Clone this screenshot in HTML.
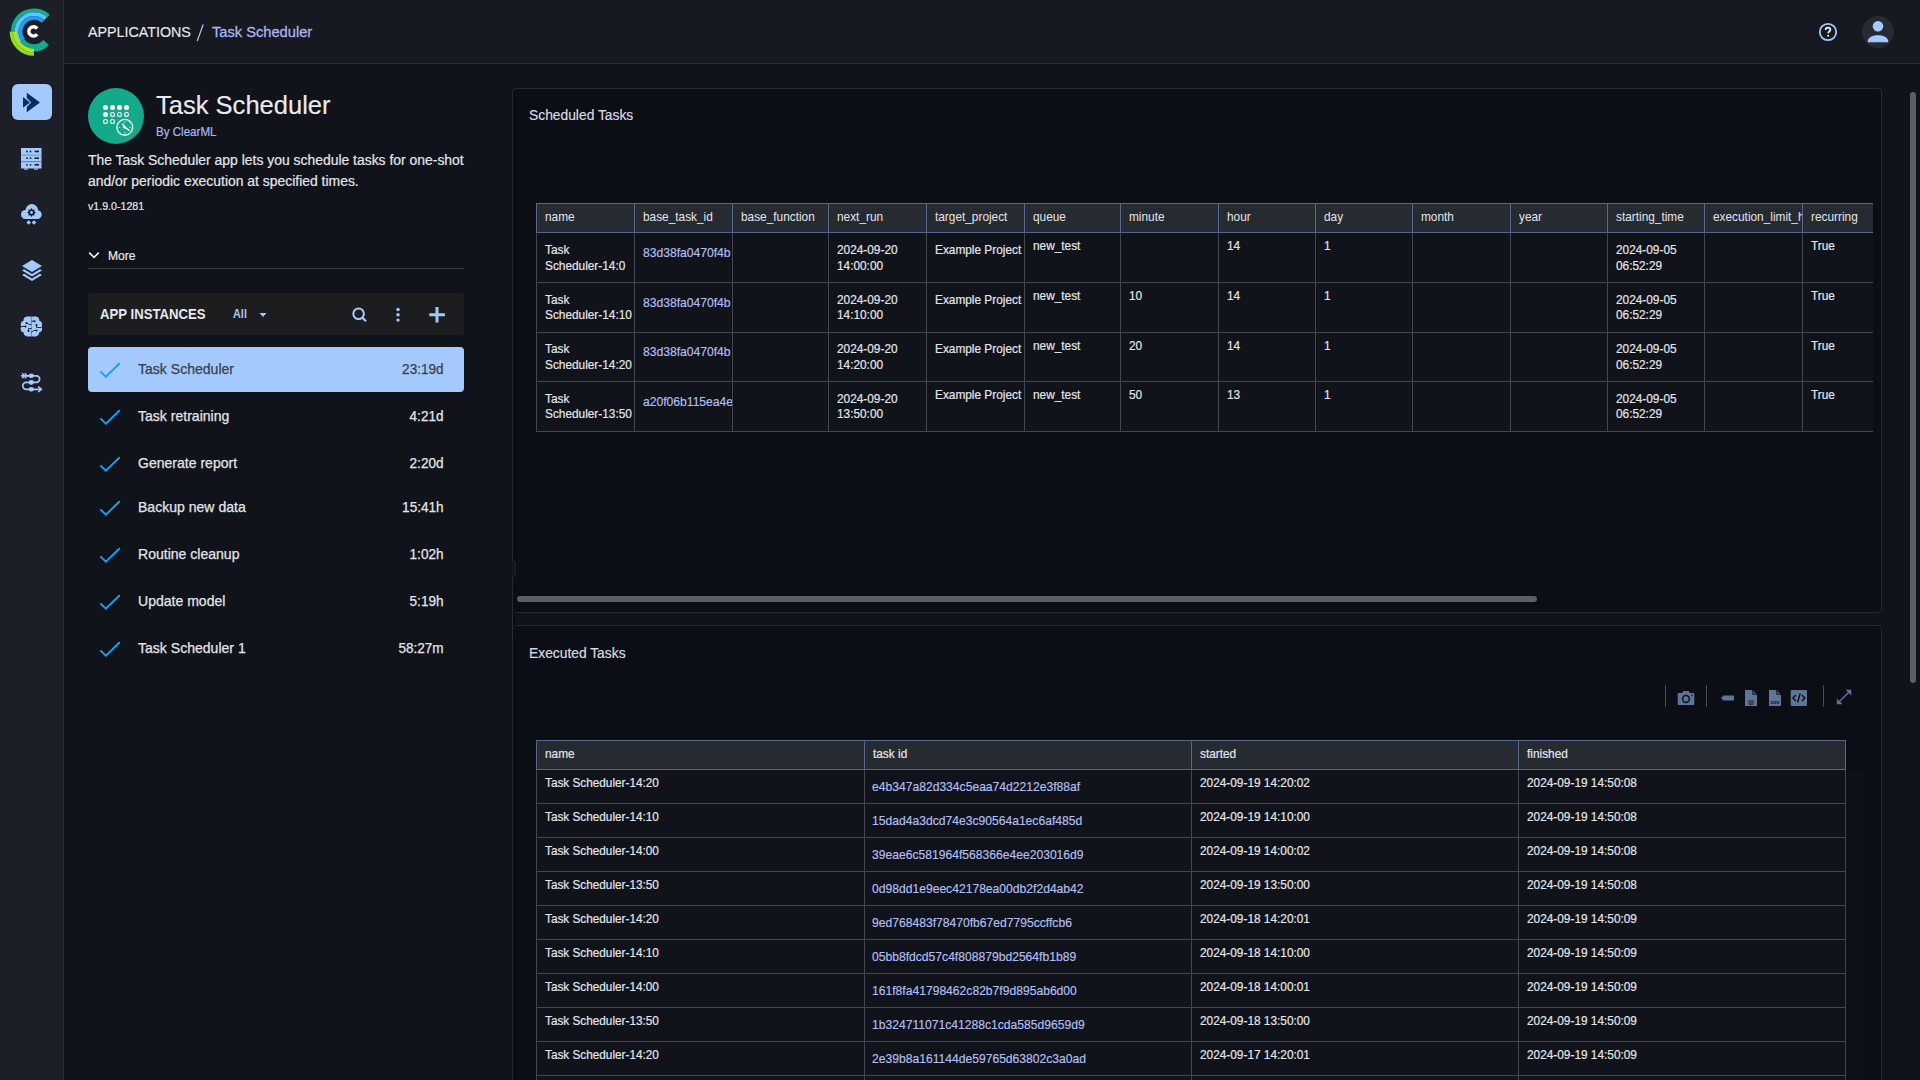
<!DOCTYPE html><html><head><meta charset="utf-8"><title>Task Scheduler</title><style>
*{box-sizing:border-box;margin:0;padding:0}
html,body{width:1920px;height:1080px;overflow:hidden;background:#10131a;font-family:"Liberation Sans",sans-serif;color:#e3e5ea}
.abs{position:absolute}
.t{position:absolute;white-space:nowrap;line-height:1}
#side{left:0;top:0;width:64px;height:1080px;background:#1c1f27;border-right:1px solid #292c34}
#hdr{left:64px;top:0;width:1856px;height:64px;background:#161920;border-bottom:1px solid #292c34}
.panel{position:absolute;background:#0b0e14;border:1px solid #27292f;border-radius:4px}
.hl{position:absolute;height:1px}
.vl{position:absolute;width:1px}
</style></head><body>
<div id="side" class="abs"></div>
<svg class="abs" style="left:0;top:0" width="64" height="64" viewBox="0 0 64 64">
<g fill="none">
<path d="M 48.42 16.03 A 21.15 21.15 0 0 0 12.85 31.5" stroke="#14aa8c" stroke-width="3.8"/>
<path d="M 45.64 18.57 A 17.4 17.4 0 0 0 20.29 42.21" stroke="#5ec5ff" stroke-width="3.8"/>
<path d="M 43.1 21.39 A 13.6 13.6 0 0 0 23.28 39.87" stroke="#1a9ff5" stroke-width="3.8"/>
<path d="M 21.12 41.57 A 16.35 16.35 0 0 0 46.15 42.44" stroke="#14aa8c" stroke-width="7.3"/>
<path d="M 11.35 31.5 A 22.65 22.65 0 0 0 34.0 54.15" stroke="#8fdc2a" stroke-width="3.4"/>
<path d="M 14.75 31.5 A 19.25 19.25 0 0 0 34.0 50.75" stroke="#b7e31a" stroke-width="3.5"/>
<path d="M 37.16 28.59 A 4.65 4.65 0 1 0 37.16 34.31" stroke="#ffffff" stroke-width="3.4"/>
</g></svg>
<div class="abs" style="left:12px;top:84px;width:40px;height:36px;background:#a3c9fd;border-radius:6px"></div>
<svg class="abs" style="left:12px;top:84px" width="40" height="36" viewBox="0 0 40 36">
<path d="M11 13 L18 18.4 L11 23.8 Z" fill="#03305e"/>
<path d="M14.8 8.8 L28 18.5 L14.8 28.3 L14.8 23 L19.3 18.5 L14.8 14 Z" fill="#03305e"/>
</svg>
<svg class="abs" style="left:20px;top:146px" width="24" height="26" viewBox="0 0 24 26">
<rect x="1" y="2" width="20.5" height="20.5" fill="#a3c9fd"/>
<rect x="1" y="8.6" width="20.5" height="1.2" fill="#7d9cc8"/>
<rect x="1" y="15.2" width="20.5" height="1" fill="#5f7aa0"/>
<g fill="#1c1f27">
<circle cx="7" cy="5.5" r="0.9"/><circle cx="10.5" cy="5.5" r="0.9"/><rect x="14.5" y="4.7" width="4.5" height="1.6"/>
<circle cx="7" cy="12.2" r="0.9"/><circle cx="10.5" cy="12.2" r="0.9"/><rect x="14.5" y="11.4" width="4.5" height="1.6"/>
<circle cx="7" cy="18.8" r="0.9"/><circle cx="10.5" cy="18.8" r="0.9"/><rect x="14.5" y="18" width="4.5" height="1.6"/>
</g>
<rect x="4" y="22.5" width="4" height="1.2" fill="#a3c9fd"/><rect x="14" y="22.5" width="4" height="1.2" fill="#a3c9fd"/>
</svg>
<svg class="abs" style="left:20px;top:202px" width="24" height="26" viewBox="0 0 24 26">
<g fill="#a3c9fd"><circle cx="5.5" cy="12.5" r="4.5"/><circle cx="11.8" cy="8.4" r="6.3"/><circle cx="17.3" cy="12.6" r="4.4"/><rect x="5.5" y="11" width="11.8" height="6"/></g>
<path d="M11.50 6.10 L12.65 7.73 L14.61 7.39 L14.27 9.35 L15.90 10.50 L14.27 11.65 L14.61 13.61 L12.65 13.27 L11.50 14.90 L10.35 13.27 L8.39 13.61 L8.73 11.65 L7.10 10.50 L8.73 9.35 L8.39 7.39 L10.35 7.73 Z" fill="#1c1f27"/>
<circle cx="11.5" cy="10.5" r="1.4" fill="#a3c9fd"/>
<path d="M8.7 18.2 L11 20.5 L8.7 22.8 L6.4 20.5 Z M14 18.2 L16.3 20.5 L14 22.8 L11.7 20.5 Z" fill="#a3c9fd"/>
</svg>
<svg class="abs" style="left:19.5px;top:258.3px" width="24" height="26" viewBox="0 0 24 26">
<path d="M12 2 L22 8 L12 14 L2 8 Z" fill="#a3c9fd"/>
<path d="M4.2 11.3 L12 16 L19.8 11.3 L22 12.6 L12 18.6 L2 12.6 Z" fill="#a3c9fd"/>
<path d="M4.2 15.8 L12 20.5 L19.8 15.8 L22 17.1 L12 23 L2 17.1 Z" fill="#a3c9fd"/>
</svg>
<svg class="abs" style="left:20px;top:314px" width="24" height="26" viewBox="0 0 24 26">
<g fill="#a3c9fd">
<circle cx="7.5" cy="6.6" r="4"/><circle cx="4.5" cy="10.6" r="3.8"/><circle cx="4.5" cy="14.8" r="3.8"/><circle cx="7.5" cy="18.6" r="3.8"/><circle cx="8.6" cy="12.5" r="5"/><rect x="7.5" y="2.6" width="3.9" height="19.8"/>
<circle cx="15.3" cy="6.6" r="4"/><circle cx="18.3" cy="10.6" r="3.8"/><circle cx="18.3" cy="14.8" r="3.8"/><circle cx="15.3" cy="18.6" r="3.8"/><circle cx="14.2" cy="12.5" r="5"/><rect x="11.4" y="2.6" width="3.9" height="19.8"/>
</g>
<path d="M11.4 2.8 V22.3" stroke="#6f7fb8" stroke-width="0.8"/>
<g stroke="#1c1f27" stroke-width="0.9" fill="none">
<path d="M6.5 9 L9.5 10.5 H11.4 M0.8 12.5 H5.5 M11.4 14.5 H8.5 V17 M11.4 7.2 H14.5 M16.5 11 V13.5 H21.5 M11.4 18.5 L13.5 16.5 H16.5"/>
</g>
<g fill="#1c1f27"><circle cx="6.5" cy="9" r="1.05"/><circle cx="5.5" cy="12.5" r="1.05"/><circle cx="8.5" cy="17" r="1.05"/><circle cx="14.5" cy="7.2" r="1.05"/><circle cx="16.5" cy="11" r="1.05"/><circle cx="16.5" cy="16.5" r="1.05"/></g>
</svg>
<svg class="abs" style="left:20px;top:370px" width="24" height="26" viewBox="0 0 24 26">
<g fill="none" stroke="#a3c9fd" stroke-width="1.7"><path d="M1 5.8 H16.4 A3.3 3.3 0 0 1 16.4 12.4 H6.25 A3.45 3.45 0 0 0 6.25 19.3 H20.5"/></g>
<g fill="#a3c9fd"><ellipse cx="11.3" cy="5.8" rx="2.6" ry="2.3"/><ellipse cx="11.3" cy="12.4" rx="2.6" ry="2.3"/><ellipse cx="11.3" cy="19.3" rx="2.6" ry="2.3"/></g>
<path d="M2.2 3.2 L4.6 5.8 L2.2 8.4 M4.8 3.2 L7.2 5.8 L4.8 8.4" stroke="#a3c9fd" stroke-width="1.4" fill="none"/>
<path d="M18.2 16.6 L21.4 19.3 L18.2 22" stroke="#a3c9fd" stroke-width="1.6" fill="none"/>
</svg>
<div id="hdr" class="abs"></div>
<div class="t" style="top:24.13px;font-size:15.2px;color:#e6e8ee;left:88px;transform:scaleX(0.94);transform-origin:0 0;-webkit-text-stroke:0.15px #e6e8ee;">APPLICATIONS</div>
<svg class="abs" style="left:194px;top:22px" width="12" height="22" viewBox="0 0 12 22"><path d="M3.2 19 L9.2 2.5" stroke="#b9c4f2" stroke-width="1.2"/></svg>
<div class="t" style="top:24.13px;font-size:15.2px;color:#a9b5f3;left:211.5px;transform:scaleX(0.965);transform-origin:0 0;-webkit-text-stroke:0.3px #a9b5f3;">Task Scheduler</div>
<svg class="abs" style="left:1816px;top:20px" width="24" height="24" viewBox="0 0 24 24">
<circle cx="12" cy="12" r="8.2" fill="none" stroke="#a3c9fd" stroke-width="1.8"/>
<path d="M9.6 10 C9.6 8.4 10.7 7.6 12 7.6 C13.4 7.6 14.4 8.5 14.4 9.7 C14.4 11.3 12.2 11.5 12.2 13.3" fill="none" stroke="#ffffff" stroke-width="1.7"/>
<circle cx="12.2" cy="15.8" r="1" fill="#ffffff"/>
</svg>
<svg class="abs" style="left:1862px;top:16px" width="32" height="32" viewBox="0 0 32 32">
<circle cx="16" cy="16" r="16" fill="#262a33"/>
<circle cx="16" cy="10.3" r="5.3" fill="#a3c9fd"/>
<path d="M5.6 26.2 C5.6 22 9.5 19.3 16 19.3 C22.5 19.3 26.4 22 26.4 26.2 Z" fill="#a3c9fd"/>
</svg>
<svg class="abs" style="left:88px;top:88px" width="56" height="56" viewBox="0 0 56 56">
<circle cx="28" cy="28" r="28" fill="#14a98b"/>
<g fill="#ffffff">
<circle cx="17.5" cy="19.5" r="2.5"/><circle cx="24.5" cy="19.5" r="2.5"/><circle cx="31.5" cy="19.5" r="2.5"/><circle cx="38.5" cy="19.5" r="2.5"/>
<circle cx="17.5" cy="26.5" r="2.5"/>
</g>
<g fill="none" stroke="#ffffff" stroke-width="1.1">
<circle cx="24.5" cy="26.5" r="1.95"/><circle cx="31.5" cy="26.5" r="1.95"/><circle cx="38.5" cy="26.5" r="1.95"/>
<circle cx="17.5" cy="33.5" r="1.95"/><circle cx="24.5" cy="33.5" r="1.95"/>
<circle cx="36.8" cy="39.3" r="7.9" stroke-width="1.3"/>
<path d="M36.8 39.3 L34.4 35.6" stroke-width="1.6"/>
<path d="M36.8 39.3 L41.6 42.6" stroke-width="1.3"/>
<path d="M36.8 33.2 V34.6 M36.8 44 V45.4 M30.8 39.3 H32.2 M41.4 39.3 H42.8" stroke-width="1" stroke-opacity="0.75"/>
</g>
<circle cx="36.8" cy="39.3" r="1.4" fill="#ffffff"/>
</svg>
<div class="t" style="top:91.62px;font-size:26.2px;color:#e9ebf0;left:156.4px;transform:scaleX(0.975);transform-origin:0 0;-webkit-text-stroke:0.15px #e9ebf0;">Task Scheduler</div>
<div class="t" style="top:126.47px;font-size:12.2px;color:#a9b5f3;left:156.4px;transform:scaleX(0.95);transform-origin:0 0;-webkit-text-stroke:0.2px #a9b5f3;">By ClearML</div>
<div class="t" style="left:88px;top:150px;font-size:14px;line-height:21px;color:#e3e5ea;white-space:normal;width:390px;-webkit-text-stroke:0.2px #e3e5ea;transform:scaleX(0.994);transform-origin:0 0">The Task Scheduler app lets you schedule tasks for one-shot<br>and/or periodic execution at specified times.</div>
<div class="t" style="top:200.52px;font-size:11.2px;color:#e3e5ea;left:88px;transform:scaleX(0.95);transform-origin:0 0;-webkit-text-stroke:0.2px #e3e5ea;">v1.9.0-1281</div>
<svg class="abs" style="left:86px;top:248px" width="16" height="14" viewBox="0 0 16 14">
<path d="M3.2 4.6 L8 9.4 L12.8 4.6" fill="none" stroke="#eef2fa" stroke-width="1.6"/></svg>
<div class="t" style="top:250.33px;font-size:12.6px;color:#e3e5ea;left:107.75px;transform:scaleX(0.96);transform-origin:0 0;-webkit-text-stroke:0.2px #e3e5ea;">More</div>
<div class="hl" style="left:88px;top:268px;width:376px;background:#3b3e46"></div>
<div class="abs" style="left:88px;top:293px;width:376px;height:42px;background:#1c1d1f;border-radius:4px"></div>
<div class="t" style="top:306.57px;font-size:14.8px;color:#e6e8ee;left:100px;transform:scaleX(0.89);transform-origin:0 0;font-weight:bold;">APP INSTANCES</div>
<div class="t" style="top:306.79px;font-size:13.6px;color:#a3c9fd;left:233px;transform:scaleX(0.8);transform-origin:0 0;font-weight:bold;">All</div>
<svg class="abs" style="left:258px;top:311px" width="10" height="8" viewBox="0 0 10 8"><path d="M1.5 2 L8.5 2 L5 6 Z" fill="#a3c9fd"/></svg>
<svg class="abs" style="left:350px;top:305px" width="20" height="20" viewBox="0 0 20 20">
<circle cx="8.6" cy="8.8" r="5.3" fill="none" stroke="#a3c9fd" stroke-width="2"/>
<path d="M12.5 12.7 L16 16.3" stroke="#a3c9fd" stroke-width="2.2"/></svg>
<svg class="abs" style="left:393px;top:305px" width="10" height="20" viewBox="0 0 10 20">
<circle cx="5" cy="4.5" r="1.7" fill="#a3c9fd"/><circle cx="5" cy="9.8" r="1.7" fill="#a3c9fd"/><circle cx="5" cy="15.1" r="1.7" fill="#a3c9fd"/></svg>
<svg class="abs" style="left:427px;top:305px" width="20" height="20" viewBox="0 0 20 20">
<path d="M10 2 V17.6 M2.3 9.8 H17.9" stroke="#a3c9fd" stroke-width="3"/></svg>
<div class="abs" style="left:88px;top:347px;width:376px;height:45px;background:#a3c9fd;border-radius:4px"></div>
<svg class="abs" style="left:98px;top:361px" width="24" height="20" viewBox="0 0 24 20"><path d="M2.9 10.9 L7.9 15.7 L21.2 2.7" fill="none" stroke="#18a0f6" stroke-width="1.9" stroke-linecap="round"/></svg>
<div class="t" style="top:361.64px;font-size:14.6px;color:#3b404b;left:138px;transform:scaleX(0.962);transform-origin:0 0;-webkit-text-stroke:0.25px #3b404b;">Task Scheduler</div>
<div class="t" style="top:361.64px;font-size:14.6px;color:#3b404b;right:1476px;transform:scaleX(0.93);transform-origin:100% 0;-webkit-text-stroke:0.25px #3b404b;">23:19d</div>
<svg class="abs" style="left:98px;top:408px" width="24" height="20" viewBox="0 0 24 20"><path d="M2.9 10.9 L7.9 15.7 L21.2 2.7" fill="none" stroke="#18a0f6" stroke-width="1.9" stroke-linecap="round"/></svg>
<div class="t" style="top:408.64px;font-size:14.6px;color:#e3e5ea;left:138px;transform:scaleX(0.962);transform-origin:0 0;-webkit-text-stroke:0.25px #e3e5ea;">Task retraining</div>
<div class="t" style="top:408.64px;font-size:14.6px;color:#e3e5ea;right:1476px;transform:scaleX(0.93);transform-origin:100% 0;-webkit-text-stroke:0.25px #e3e5ea;">4:21d</div>
<svg class="abs" style="left:98px;top:455px" width="24" height="20" viewBox="0 0 24 20"><path d="M2.9 10.9 L7.9 15.7 L21.2 2.7" fill="none" stroke="#18a0f6" stroke-width="1.9" stroke-linecap="round"/></svg>
<div class="t" style="top:455.64px;font-size:14.6px;color:#e3e5ea;left:138px;transform:scaleX(0.962);transform-origin:0 0;-webkit-text-stroke:0.25px #e3e5ea;">Generate report</div>
<div class="t" style="top:455.64px;font-size:14.6px;color:#e3e5ea;right:1476px;transform:scaleX(0.93);transform-origin:100% 0;-webkit-text-stroke:0.25px #e3e5ea;">2:20d</div>
<svg class="abs" style="left:98px;top:499px" width="24" height="20" viewBox="0 0 24 20"><path d="M2.9 10.9 L7.9 15.7 L21.2 2.7" fill="none" stroke="#18a0f6" stroke-width="1.9" stroke-linecap="round"/></svg>
<div class="t" style="top:499.64px;font-size:14.6px;color:#e3e5ea;left:138px;transform:scaleX(0.962);transform-origin:0 0;-webkit-text-stroke:0.25px #e3e5ea;">Backup new data</div>
<div class="t" style="top:499.64px;font-size:14.6px;color:#e3e5ea;right:1476px;transform:scaleX(0.93);transform-origin:100% 0;-webkit-text-stroke:0.25px #e3e5ea;">15:41h</div>
<svg class="abs" style="left:98px;top:546px" width="24" height="20" viewBox="0 0 24 20"><path d="M2.9 10.9 L7.9 15.7 L21.2 2.7" fill="none" stroke="#18a0f6" stroke-width="1.9" stroke-linecap="round"/></svg>
<div class="t" style="top:546.64px;font-size:14.6px;color:#e3e5ea;left:138px;transform:scaleX(0.962);transform-origin:0 0;-webkit-text-stroke:0.25px #e3e5ea;">Routine cleanup</div>
<div class="t" style="top:546.64px;font-size:14.6px;color:#e3e5ea;right:1476px;transform:scaleX(0.93);transform-origin:100% 0;-webkit-text-stroke:0.25px #e3e5ea;">1:02h</div>
<svg class="abs" style="left:98px;top:593px" width="24" height="20" viewBox="0 0 24 20"><path d="M2.9 10.9 L7.9 15.7 L21.2 2.7" fill="none" stroke="#18a0f6" stroke-width="1.9" stroke-linecap="round"/></svg>
<div class="t" style="top:593.64px;font-size:14.6px;color:#e3e5ea;left:138px;transform:scaleX(0.962);transform-origin:0 0;-webkit-text-stroke:0.25px #e3e5ea;">Update model</div>
<div class="t" style="top:593.64px;font-size:14.6px;color:#e3e5ea;right:1476px;transform:scaleX(0.93);transform-origin:100% 0;-webkit-text-stroke:0.25px #e3e5ea;">5:19h</div>
<svg class="abs" style="left:98px;top:640px" width="24" height="20" viewBox="0 0 24 20"><path d="M2.9 10.9 L7.9 15.7 L21.2 2.7" fill="none" stroke="#18a0f6" stroke-width="1.9" stroke-linecap="round"/></svg>
<div class="t" style="top:640.64px;font-size:14.6px;color:#e3e5ea;left:138px;transform:scaleX(0.962);transform-origin:0 0;-webkit-text-stroke:0.25px #e3e5ea;">Task Scheduler 1</div>
<div class="t" style="top:640.64px;font-size:14.6px;color:#e3e5ea;right:1476px;transform:scaleX(0.93);transform-origin:100% 0;-webkit-text-stroke:0.25px #e3e5ea;">58:27m</div>
<div class="panel" style="left:512px;top:88px;width:1370px;height:525px"></div>
<div class="panel" style="left:512px;top:625px;width:1370px;height:500px"></div>
<div class="abs" style="left:513px;top:611px;width:2px;height:16px;background:#0b0e14"></div>
<div class="vl" style="left:512px;top:600px;height:40px;background:#292c34"></div>
<svg class="abs" style="left:511px;top:558px" width="6" height="22" viewBox="0 0 6 22"><path d="M1.5 0 V2 L4 4.5 V17.5 L1.5 20 V22" fill="#0b0e14" stroke="#292c34" stroke-width="1"/></svg>
<div class="abs" style="left:1846px;top:770px;width:18px;height:310px;background:#0d1017"></div>
<div class="t" style="top:107.03px;font-size:15.2px;color:#d9dbe1;left:529px;transform:scaleX(0.91);transform-origin:0 0;-webkit-text-stroke:0.2px #d9dbe1;">Scheduled Tasks</div>
<div class="t" style="top:644.73px;font-size:15.2px;color:#d9dbe1;left:529px;transform:scaleX(0.91);transform-origin:0 0;-webkit-text-stroke:0.2px #d9dbe1;">Executed Tasks</div>
<div class="abs" style="left:517px;top:596px;width:1020px;height:6px;background:#5b5f67;border-radius:3px"></div>
<div class="abs" style="left:1910px;top:92px;width:6px;height:591px;background:#5b5f67;border-radius:3px"></div>
<div class="abs" style="left:536px;top:203px;width:1337px;height:29px;background:#262a31"></div>
<div class="abs" style="left:536px;top:232px;width:1337px;height:199px;background:#10131a"></div>
<div class="hl" style="left:536px;top:282px;width:1337px;background:#42464e"></div>
<div class="hl" style="left:536px;top:332px;width:1337px;background:#42464e"></div>
<div class="hl" style="left:536px;top:381px;width:1337px;background:#42464e"></div>
<div class="hl" style="left:536px;top:431px;width:1337px;background:#42464e"></div>
<div class="vl" style="left:536px;top:232px;height:200px;background:#42464e"></div>
<div class="vl" style="left:634px;top:232px;height:200px;background:#42464e"></div>
<div class="vl" style="left:732px;top:232px;height:200px;background:#42464e"></div>
<div class="vl" style="left:828px;top:232px;height:200px;background:#42464e"></div>
<div class="vl" style="left:926px;top:232px;height:200px;background:#42464e"></div>
<div class="vl" style="left:1024px;top:232px;height:200px;background:#42464e"></div>
<div class="vl" style="left:1120px;top:232px;height:200px;background:#42464e"></div>
<div class="vl" style="left:1218px;top:232px;height:200px;background:#42464e"></div>
<div class="vl" style="left:1315px;top:232px;height:200px;background:#42464e"></div>
<div class="vl" style="left:1412px;top:232px;height:200px;background:#42464e"></div>
<div class="vl" style="left:1510px;top:232px;height:200px;background:#42464e"></div>
<div class="vl" style="left:1607px;top:232px;height:200px;background:#42464e"></div>
<div class="vl" style="left:1704px;top:232px;height:200px;background:#42464e"></div>
<div class="vl" style="left:1802px;top:232px;height:200px;background:#42464e"></div>
<div class="hl" style="left:536px;top:203px;width:1337px;background:#57668f"></div>
<div class="hl" style="left:536px;top:232px;width:1337px;background:#57668f"></div>
<div class="vl" style="left:536px;top:203px;height:30px;background:#57668f"></div>
<div class="vl" style="left:634px;top:203px;height:30px;background:#57668f"></div>
<div class="vl" style="left:732px;top:203px;height:30px;background:#57668f"></div>
<div class="vl" style="left:828px;top:203px;height:30px;background:#57668f"></div>
<div class="vl" style="left:926px;top:203px;height:30px;background:#57668f"></div>
<div class="vl" style="left:1024px;top:203px;height:30px;background:#57668f"></div>
<div class="vl" style="left:1120px;top:203px;height:30px;background:#57668f"></div>
<div class="vl" style="left:1218px;top:203px;height:30px;background:#57668f"></div>
<div class="vl" style="left:1315px;top:203px;height:30px;background:#57668f"></div>
<div class="vl" style="left:1412px;top:203px;height:30px;background:#57668f"></div>
<div class="vl" style="left:1510px;top:203px;height:30px;background:#57668f"></div>
<div class="vl" style="left:1607px;top:203px;height:30px;background:#57668f"></div>
<div class="vl" style="left:1704px;top:203px;height:30px;background:#57668f"></div>
<div class="vl" style="left:1802px;top:203px;height:30px;background:#57668f"></div>
<div class="abs" style="left:536px;top:203px;width:1337px;height:29px;overflow:hidden">
<div class="t" style="left:8.5px;top:1.70px;font-size:12.6px;line-height:18px;padding-top:3px;height:19px;color:#e4e5e9;width:94.7px;overflow:hidden;transform:scaleX(0.94);transform-origin:0 0">name</div>
<div class="t" style="left:106.5px;top:1.70px;font-size:12.6px;line-height:18px;padding-top:3px;height:19px;color:#e4e5e9;width:94.7px;overflow:hidden;transform:scaleX(0.94);transform-origin:0 0">base_task_id</div>
<div class="t" style="left:204.5px;top:1.70px;font-size:12.6px;line-height:18px;padding-top:3px;height:19px;color:#e4e5e9;width:92.6px;overflow:hidden;transform:scaleX(0.94);transform-origin:0 0">base_function</div>
<div class="t" style="left:300.5px;top:1.70px;font-size:12.6px;line-height:18px;padding-top:3px;height:19px;color:#e4e5e9;width:94.7px;overflow:hidden;transform:scaleX(0.94);transform-origin:0 0">next_run</div>
<div class="t" style="left:398.5px;top:1.70px;font-size:12.6px;line-height:18px;padding-top:3px;height:19px;color:#e4e5e9;width:94.7px;overflow:hidden;transform:scaleX(0.94);transform-origin:0 0">target_project</div>
<div class="t" style="left:496.5px;top:1.70px;font-size:12.6px;line-height:18px;padding-top:3px;height:19px;color:#e4e5e9;width:92.6px;overflow:hidden;transform:scaleX(0.94);transform-origin:0 0">queue</div>
<div class="t" style="left:592.5px;top:1.70px;font-size:12.6px;line-height:18px;padding-top:3px;height:19px;color:#e4e5e9;width:94.7px;overflow:hidden;transform:scaleX(0.94);transform-origin:0 0">minute</div>
<div class="t" style="left:690.5px;top:1.70px;font-size:12.6px;line-height:18px;padding-top:3px;height:19px;color:#e4e5e9;width:93.6px;overflow:hidden;transform:scaleX(0.94);transform-origin:0 0">hour</div>
<div class="t" style="left:787.5px;top:1.70px;font-size:12.6px;line-height:18px;padding-top:3px;height:19px;color:#e4e5e9;width:93.6px;overflow:hidden;transform:scaleX(0.94);transform-origin:0 0">day</div>
<div class="t" style="left:884.5px;top:1.70px;font-size:12.6px;line-height:18px;padding-top:3px;height:19px;color:#e4e5e9;width:94.7px;overflow:hidden;transform:scaleX(0.94);transform-origin:0 0">month</div>
<div class="t" style="left:982.5px;top:1.70px;font-size:12.6px;line-height:18px;padding-top:3px;height:19px;color:#e4e5e9;width:93.6px;overflow:hidden;transform:scaleX(0.94);transform-origin:0 0">year</div>
<div class="t" style="left:1079.5px;top:1.70px;font-size:12.6px;line-height:18px;padding-top:3px;height:19px;color:#e4e5e9;width:93.6px;overflow:hidden;transform:scaleX(0.94);transform-origin:0 0">starting_time</div>
<div class="t" style="left:1176.5px;top:1.70px;font-size:12.6px;line-height:18px;padding-top:3px;height:19px;color:#e4e5e9;width:94.7px;overflow:hidden;transform:scaleX(0.94);transform-origin:0 0">execution_limit_hours</div>
<div class="t" style="left:1274.5px;top:1.70px;font-size:12.6px;line-height:18px;padding-top:3px;height:19px;color:#e4e5e9;width:212.8px;overflow:hidden;transform:scaleX(0.94);transform-origin:0 0">recurring</div>
</div>
<div class="abs" style="left:0;top:0;width:1873px;height:1080px;overflow:hidden">
<div class="t" style="left:544.5px;top:244.33px;font-size:12.6px;color:#e4e5e9;transform:scaleX(0.94);transform-origin:0 0;-webkit-text-stroke:0.2px #e4e5e9">Task</div>
<div class="t" style="left:544.5px;top:260.13px;font-size:12.6px;color:#e4e5e9;transform:scaleX(0.94);transform-origin:0 0;-webkit-text-stroke:0.2px #e4e5e9">Scheduler-14:0</div>
<div class="abs" style="left:635px;top:232px;width:97px;height:49px;overflow:hidden"><div class="t" style="left:7.5px;top:14.20px;font-size:13px;color:#b0bdf0;transform:scaleX(0.932);transform-origin:0 0;-webkit-text-stroke:0.2px #b0bdf0">83d38fa0470f4b</div></div>
<div class="t" style="left:836.5px;top:244.33px;font-size:12.6px;color:#e4e5e9;transform:scaleX(0.94);transform-origin:0 0;-webkit-text-stroke:0.2px #e4e5e9">2024-09-20</div>
<div class="t" style="left:836.5px;top:260.13px;font-size:12.6px;color:#e4e5e9;transform:scaleX(0.94);transform-origin:0 0;-webkit-text-stroke:0.2px #e4e5e9">14:00:00</div>
<div class="abs" style="left:927px;top:232px;width:97px;height:49px;overflow:hidden"><div class="t" style="left:7.5px;top:12.33px;font-size:12.6px;color:#e4e5e9;transform:scaleX(0.94);transform-origin:0 0;-webkit-text-stroke:0.2px #e4e5e9">Example Project</div></div>
<div class="t" style="left:1032.5px;top:239.93px;font-size:12.6px;color:#e4e5e9;transform:scaleX(0.94);transform-origin:0 0;-webkit-text-stroke:0.2px #e4e5e9">new_test</div>
<div class="t" style="left:1226.5px;top:239.93px;font-size:12.6px;color:#e4e5e9;transform:scaleX(0.94);transform-origin:0 0;-webkit-text-stroke:0.2px #e4e5e9">14</div>
<div class="t" style="left:1323.5px;top:239.93px;font-size:12.6px;color:#e4e5e9;transform:scaleX(0.94);transform-origin:0 0;-webkit-text-stroke:0.2px #e4e5e9">1</div>
<div class="t" style="left:1615.5px;top:244.33px;font-size:12.6px;color:#e4e5e9;transform:scaleX(0.94);transform-origin:0 0;-webkit-text-stroke:0.2px #e4e5e9">2024-09-05</div>
<div class="t" style="left:1615.5px;top:260.13px;font-size:12.6px;color:#e4e5e9;transform:scaleX(0.94);transform-origin:0 0;-webkit-text-stroke:0.2px #e4e5e9">06:52:29</div>
<div class="t" style="left:1810.5px;top:239.93px;font-size:12.6px;color:#e4e5e9;transform:scaleX(0.94);transform-origin:0 0;-webkit-text-stroke:0.2px #e4e5e9">True</div>
<div class="t" style="left:544.5px;top:294.43px;font-size:12.6px;color:#e4e5e9;transform:scaleX(0.94);transform-origin:0 0;-webkit-text-stroke:0.2px #e4e5e9">Task</div>
<div class="t" style="left:544.5px;top:309.23px;font-size:12.6px;color:#e4e5e9;transform:scaleX(0.94);transform-origin:0 0;-webkit-text-stroke:0.2px #e4e5e9">Scheduler-14:10</div>
<div class="abs" style="left:635px;top:282px;width:97px;height:49px;overflow:hidden"><div class="t" style="left:7.5px;top:14.30px;font-size:13px;color:#b0bdf0;transform:scaleX(0.932);transform-origin:0 0;-webkit-text-stroke:0.2px #b0bdf0">83d38fa0470f4b</div></div>
<div class="t" style="left:836.5px;top:294.43px;font-size:12.6px;color:#e4e5e9;transform:scaleX(0.94);transform-origin:0 0;-webkit-text-stroke:0.2px #e4e5e9">2024-09-20</div>
<div class="t" style="left:836.5px;top:309.23px;font-size:12.6px;color:#e4e5e9;transform:scaleX(0.94);transform-origin:0 0;-webkit-text-stroke:0.2px #e4e5e9">14:10:00</div>
<div class="abs" style="left:927px;top:282px;width:97px;height:49px;overflow:hidden"><div class="t" style="left:7.5px;top:12.43px;font-size:12.6px;color:#e4e5e9;transform:scaleX(0.94);transform-origin:0 0;-webkit-text-stroke:0.2px #e4e5e9">Example Project</div></div>
<div class="t" style="left:1032.5px;top:290.03px;font-size:12.6px;color:#e4e5e9;transform:scaleX(0.94);transform-origin:0 0;-webkit-text-stroke:0.2px #e4e5e9">new_test</div>
<div class="t" style="left:1128.5px;top:290.03px;font-size:12.6px;color:#e4e5e9;transform:scaleX(0.94);transform-origin:0 0;-webkit-text-stroke:0.2px #e4e5e9">10</div>
<div class="t" style="left:1226.5px;top:290.03px;font-size:12.6px;color:#e4e5e9;transform:scaleX(0.94);transform-origin:0 0;-webkit-text-stroke:0.2px #e4e5e9">14</div>
<div class="t" style="left:1323.5px;top:290.03px;font-size:12.6px;color:#e4e5e9;transform:scaleX(0.94);transform-origin:0 0;-webkit-text-stroke:0.2px #e4e5e9">1</div>
<div class="t" style="left:1615.5px;top:294.43px;font-size:12.6px;color:#e4e5e9;transform:scaleX(0.94);transform-origin:0 0;-webkit-text-stroke:0.2px #e4e5e9">2024-09-05</div>
<div class="t" style="left:1615.5px;top:309.23px;font-size:12.6px;color:#e4e5e9;transform:scaleX(0.94);transform-origin:0 0;-webkit-text-stroke:0.2px #e4e5e9">06:52:29</div>
<div class="t" style="left:1810.5px;top:290.03px;font-size:12.6px;color:#e4e5e9;transform:scaleX(0.94);transform-origin:0 0;-webkit-text-stroke:0.2px #e4e5e9">True</div>
<div class="t" style="left:544.5px;top:343.43px;font-size:12.6px;color:#e4e5e9;transform:scaleX(0.94);transform-origin:0 0;-webkit-text-stroke:0.2px #e4e5e9">Task</div>
<div class="t" style="left:544.5px;top:358.93px;font-size:12.6px;color:#e4e5e9;transform:scaleX(0.94);transform-origin:0 0;-webkit-text-stroke:0.2px #e4e5e9">Scheduler-14:20</div>
<div class="abs" style="left:635px;top:332px;width:97px;height:49px;overflow:hidden"><div class="t" style="left:7.5px;top:13.30px;font-size:13px;color:#b0bdf0;transform:scaleX(0.932);transform-origin:0 0;-webkit-text-stroke:0.2px #b0bdf0">83d38fa0470f4b</div></div>
<div class="t" style="left:836.5px;top:343.43px;font-size:12.6px;color:#e4e5e9;transform:scaleX(0.94);transform-origin:0 0;-webkit-text-stroke:0.2px #e4e5e9">2024-09-20</div>
<div class="t" style="left:836.5px;top:358.93px;font-size:12.6px;color:#e4e5e9;transform:scaleX(0.94);transform-origin:0 0;-webkit-text-stroke:0.2px #e4e5e9">14:20:00</div>
<div class="abs" style="left:927px;top:332px;width:97px;height:49px;overflow:hidden"><div class="t" style="left:7.5px;top:11.43px;font-size:12.6px;color:#e4e5e9;transform:scaleX(0.94);transform-origin:0 0;-webkit-text-stroke:0.2px #e4e5e9">Example Project</div></div>
<div class="t" style="left:1032.5px;top:339.53px;font-size:12.6px;color:#e4e5e9;transform:scaleX(0.94);transform-origin:0 0;-webkit-text-stroke:0.2px #e4e5e9">new_test</div>
<div class="t" style="left:1128.5px;top:339.53px;font-size:12.6px;color:#e4e5e9;transform:scaleX(0.94);transform-origin:0 0;-webkit-text-stroke:0.2px #e4e5e9">20</div>
<div class="t" style="left:1226.5px;top:339.53px;font-size:12.6px;color:#e4e5e9;transform:scaleX(0.94);transform-origin:0 0;-webkit-text-stroke:0.2px #e4e5e9">14</div>
<div class="t" style="left:1323.5px;top:339.53px;font-size:12.6px;color:#e4e5e9;transform:scaleX(0.94);transform-origin:0 0;-webkit-text-stroke:0.2px #e4e5e9">1</div>
<div class="t" style="left:1615.5px;top:343.43px;font-size:12.6px;color:#e4e5e9;transform:scaleX(0.94);transform-origin:0 0;-webkit-text-stroke:0.2px #e4e5e9">2024-09-05</div>
<div class="t" style="left:1615.5px;top:358.93px;font-size:12.6px;color:#e4e5e9;transform:scaleX(0.94);transform-origin:0 0;-webkit-text-stroke:0.2px #e4e5e9">06:52:29</div>
<div class="t" style="left:1810.5px;top:339.53px;font-size:12.6px;color:#e4e5e9;transform:scaleX(0.94);transform-origin:0 0;-webkit-text-stroke:0.2px #e4e5e9">True</div>
<div class="t" style="left:544.5px;top:393.23px;font-size:12.6px;color:#e4e5e9;transform:scaleX(0.94);transform-origin:0 0;-webkit-text-stroke:0.2px #e4e5e9">Task</div>
<div class="t" style="left:544.5px;top:408.13px;font-size:12.6px;color:#e4e5e9;transform:scaleX(0.94);transform-origin:0 0;-webkit-text-stroke:0.2px #e4e5e9">Scheduler-13:50</div>
<div class="abs" style="left:635px;top:381px;width:97px;height:49px;overflow:hidden"><div class="t" style="left:7.5px;top:14.10px;font-size:13px;color:#b0bdf0;transform:scaleX(0.932);transform-origin:0 0;-webkit-text-stroke:0.2px #b0bdf0">a20f06b115ea4e</div></div>
<div class="t" style="left:836.5px;top:393.23px;font-size:12.6px;color:#e4e5e9;transform:scaleX(0.94);transform-origin:0 0;-webkit-text-stroke:0.2px #e4e5e9">2024-09-20</div>
<div class="t" style="left:836.5px;top:408.13px;font-size:12.6px;color:#e4e5e9;transform:scaleX(0.94);transform-origin:0 0;-webkit-text-stroke:0.2px #e4e5e9">13:50:00</div>
<div class="abs" style="left:927px;top:381px;width:97px;height:49px;overflow:hidden"><div class="t" style="left:7.5px;top:8.23px;font-size:12.6px;color:#e4e5e9;transform:scaleX(0.94);transform-origin:0 0;-webkit-text-stroke:0.2px #e4e5e9">Example Project</div></div>
<div class="t" style="left:1032.5px;top:389.23px;font-size:12.6px;color:#e4e5e9;transform:scaleX(0.94);transform-origin:0 0;-webkit-text-stroke:0.2px #e4e5e9">new_test</div>
<div class="t" style="left:1128.5px;top:389.23px;font-size:12.6px;color:#e4e5e9;transform:scaleX(0.94);transform-origin:0 0;-webkit-text-stroke:0.2px #e4e5e9">50</div>
<div class="t" style="left:1226.5px;top:389.23px;font-size:12.6px;color:#e4e5e9;transform:scaleX(0.94);transform-origin:0 0;-webkit-text-stroke:0.2px #e4e5e9">13</div>
<div class="t" style="left:1323.5px;top:389.23px;font-size:12.6px;color:#e4e5e9;transform:scaleX(0.94);transform-origin:0 0;-webkit-text-stroke:0.2px #e4e5e9">1</div>
<div class="t" style="left:1615.5px;top:393.23px;font-size:12.6px;color:#e4e5e9;transform:scaleX(0.94);transform-origin:0 0;-webkit-text-stroke:0.2px #e4e5e9">2024-09-05</div>
<div class="t" style="left:1615.5px;top:408.13px;font-size:12.6px;color:#e4e5e9;transform:scaleX(0.94);transform-origin:0 0;-webkit-text-stroke:0.2px #e4e5e9">06:52:29</div>
<div class="t" style="left:1810.5px;top:389.23px;font-size:12.6px;color:#e4e5e9;transform:scaleX(0.94);transform-origin:0 0;-webkit-text-stroke:0.2px #e4e5e9">True</div>
</div>
<div class="abs" style="left:536px;top:740px;width:1310px;height:29px;background:#262a31"></div>
<div class="abs" style="left:536px;top:769px;width:1310px;height:311px;background:#10131a"></div>
<div class="hl" style="left:536px;top:803px;width:1310px;background:#42464e"></div>
<div class="hl" style="left:536px;top:837px;width:1310px;background:#42464e"></div>
<div class="hl" style="left:536px;top:871px;width:1310px;background:#42464e"></div>
<div class="hl" style="left:536px;top:905px;width:1310px;background:#42464e"></div>
<div class="hl" style="left:536px;top:939px;width:1310px;background:#42464e"></div>
<div class="hl" style="left:536px;top:973px;width:1310px;background:#42464e"></div>
<div class="hl" style="left:536px;top:1007px;width:1310px;background:#42464e"></div>
<div class="hl" style="left:536px;top:1041px;width:1310px;background:#42464e"></div>
<div class="hl" style="left:536px;top:1075px;width:1310px;background:#42464e"></div>
<div class="vl" style="left:536px;top:769px;height:311px;background:#42464e"></div>
<div class="vl" style="left:864px;top:769px;height:311px;background:#42464e"></div>
<div class="vl" style="left:1191px;top:769px;height:311px;background:#42464e"></div>
<div class="vl" style="left:1518px;top:769px;height:311px;background:#42464e"></div>
<div class="vl" style="left:1845px;top:769px;height:311px;background:#42464e"></div>
<div class="hl" style="left:536px;top:740px;width:1310px;background:#57668f"></div>
<div class="hl" style="left:536px;top:769px;width:1310px;background:#57668f"></div>
<div class="vl" style="left:536px;top:740px;height:30px;background:#57668f"></div>
<div class="vl" style="left:864px;top:740px;height:30px;background:#57668f"></div>
<div class="vl" style="left:1191px;top:740px;height:30px;background:#57668f"></div>
<div class="vl" style="left:1518px;top:740px;height:30px;background:#57668f"></div>
<div class="vl" style="left:1845px;top:740px;height:30px;background:#57668f"></div>
<div class="t" style="left:544.5px;top:747.73px;font-size:12.6px;color:#e4e5e9;transform:scaleX(0.94);transform-origin:0 0;-webkit-text-stroke:0.2px #e4e5e9">name</div>
<div class="t" style="left:872.5px;top:747.73px;font-size:12.6px;color:#e4e5e9;transform:scaleX(0.94);transform-origin:0 0;-webkit-text-stroke:0.2px #e4e5e9">task id</div>
<div class="t" style="left:1199.5px;top:747.73px;font-size:12.6px;color:#e4e5e9;transform:scaleX(0.94);transform-origin:0 0;-webkit-text-stroke:0.2px #e4e5e9">started</div>
<div class="t" style="left:1526.5px;top:747.73px;font-size:12.6px;color:#e4e5e9;transform:scaleX(0.94);transform-origin:0 0;-webkit-text-stroke:0.2px #e4e5e9">finished</div>
<div class="t" style="left:544.5px;top:777.03px;font-size:12.6px;color:#e4e5e9;transform:scaleX(0.935);transform-origin:0 0;-webkit-text-stroke:0.2px #e4e5e9">Task Scheduler-14:20</div>
<div class="t" style="left:872px;top:779.60px;font-size:13px;color:#b0bdf0;transform:scaleX(0.932);transform-origin:0 0;-webkit-text-stroke:0.2px #b0bdf0">e4b347a82d334c5eaa74d2212e3f88af</div>
<div class="t" style="left:1199.5px;top:777.03px;font-size:12.6px;color:#e4e5e9;transform:scaleX(0.94);transform-origin:0 0;-webkit-text-stroke:0.2px #e4e5e9">2024-09-19 14:20:02</div>
<div class="t" style="left:1526.5px;top:777.03px;font-size:12.6px;color:#e4e5e9;transform:scaleX(0.94);transform-origin:0 0;-webkit-text-stroke:0.2px #e4e5e9">2024-09-19 14:50:08</div>
<div class="t" style="left:544.5px;top:811.03px;font-size:12.6px;color:#e4e5e9;transform:scaleX(0.935);transform-origin:0 0;-webkit-text-stroke:0.2px #e4e5e9">Task Scheduler-14:10</div>
<div class="t" style="left:872px;top:813.60px;font-size:13px;color:#b0bdf0;transform:scaleX(0.932);transform-origin:0 0;-webkit-text-stroke:0.2px #b0bdf0">15dad4a3dcd74e3c90564a1ec6af485d</div>
<div class="t" style="left:1199.5px;top:811.03px;font-size:12.6px;color:#e4e5e9;transform:scaleX(0.94);transform-origin:0 0;-webkit-text-stroke:0.2px #e4e5e9">2024-09-19 14:10:00</div>
<div class="t" style="left:1526.5px;top:811.03px;font-size:12.6px;color:#e4e5e9;transform:scaleX(0.94);transform-origin:0 0;-webkit-text-stroke:0.2px #e4e5e9">2024-09-19 14:50:08</div>
<div class="t" style="left:544.5px;top:845.03px;font-size:12.6px;color:#e4e5e9;transform:scaleX(0.935);transform-origin:0 0;-webkit-text-stroke:0.2px #e4e5e9">Task Scheduler-14:00</div>
<div class="t" style="left:872px;top:847.60px;font-size:13px;color:#b0bdf0;transform:scaleX(0.932);transform-origin:0 0;-webkit-text-stroke:0.2px #b0bdf0">39eae6c581964f568366e4ee203016d9</div>
<div class="t" style="left:1199.5px;top:845.03px;font-size:12.6px;color:#e4e5e9;transform:scaleX(0.94);transform-origin:0 0;-webkit-text-stroke:0.2px #e4e5e9">2024-09-19 14:00:02</div>
<div class="t" style="left:1526.5px;top:845.03px;font-size:12.6px;color:#e4e5e9;transform:scaleX(0.94);transform-origin:0 0;-webkit-text-stroke:0.2px #e4e5e9">2024-09-19 14:50:08</div>
<div class="t" style="left:544.5px;top:879.03px;font-size:12.6px;color:#e4e5e9;transform:scaleX(0.935);transform-origin:0 0;-webkit-text-stroke:0.2px #e4e5e9">Task Scheduler-13:50</div>
<div class="t" style="left:872px;top:881.60px;font-size:13px;color:#b0bdf0;transform:scaleX(0.932);transform-origin:0 0;-webkit-text-stroke:0.2px #b0bdf0">0d98dd1e9eec42178ea00db2f2d4ab42</div>
<div class="t" style="left:1199.5px;top:879.03px;font-size:12.6px;color:#e4e5e9;transform:scaleX(0.94);transform-origin:0 0;-webkit-text-stroke:0.2px #e4e5e9">2024-09-19 13:50:00</div>
<div class="t" style="left:1526.5px;top:879.03px;font-size:12.6px;color:#e4e5e9;transform:scaleX(0.94);transform-origin:0 0;-webkit-text-stroke:0.2px #e4e5e9">2024-09-19 14:50:08</div>
<div class="t" style="left:544.5px;top:913.03px;font-size:12.6px;color:#e4e5e9;transform:scaleX(0.935);transform-origin:0 0;-webkit-text-stroke:0.2px #e4e5e9">Task Scheduler-14:20</div>
<div class="t" style="left:872px;top:915.60px;font-size:13px;color:#b0bdf0;transform:scaleX(0.932);transform-origin:0 0;-webkit-text-stroke:0.2px #b0bdf0">9ed768483f78470fb67ed7795ccffcb6</div>
<div class="t" style="left:1199.5px;top:913.03px;font-size:12.6px;color:#e4e5e9;transform:scaleX(0.94);transform-origin:0 0;-webkit-text-stroke:0.2px #e4e5e9">2024-09-18 14:20:01</div>
<div class="t" style="left:1526.5px;top:913.03px;font-size:12.6px;color:#e4e5e9;transform:scaleX(0.94);transform-origin:0 0;-webkit-text-stroke:0.2px #e4e5e9">2024-09-19 14:50:09</div>
<div class="t" style="left:544.5px;top:947.03px;font-size:12.6px;color:#e4e5e9;transform:scaleX(0.935);transform-origin:0 0;-webkit-text-stroke:0.2px #e4e5e9">Task Scheduler-14:10</div>
<div class="t" style="left:872px;top:949.60px;font-size:13px;color:#b0bdf0;transform:scaleX(0.932);transform-origin:0 0;-webkit-text-stroke:0.2px #b0bdf0">05bb8fdcd57c4f808879bd2564fb1b89</div>
<div class="t" style="left:1199.5px;top:947.03px;font-size:12.6px;color:#e4e5e9;transform:scaleX(0.94);transform-origin:0 0;-webkit-text-stroke:0.2px #e4e5e9">2024-09-18 14:10:00</div>
<div class="t" style="left:1526.5px;top:947.03px;font-size:12.6px;color:#e4e5e9;transform:scaleX(0.94);transform-origin:0 0;-webkit-text-stroke:0.2px #e4e5e9">2024-09-19 14:50:09</div>
<div class="t" style="left:544.5px;top:981.03px;font-size:12.6px;color:#e4e5e9;transform:scaleX(0.935);transform-origin:0 0;-webkit-text-stroke:0.2px #e4e5e9">Task Scheduler-14:00</div>
<div class="t" style="left:872px;top:983.60px;font-size:13px;color:#b0bdf0;transform:scaleX(0.932);transform-origin:0 0;-webkit-text-stroke:0.2px #b0bdf0">161f8fa41798462c82b7f9d895ab6d00</div>
<div class="t" style="left:1199.5px;top:981.03px;font-size:12.6px;color:#e4e5e9;transform:scaleX(0.94);transform-origin:0 0;-webkit-text-stroke:0.2px #e4e5e9">2024-09-18 14:00:01</div>
<div class="t" style="left:1526.5px;top:981.03px;font-size:12.6px;color:#e4e5e9;transform:scaleX(0.94);transform-origin:0 0;-webkit-text-stroke:0.2px #e4e5e9">2024-09-19 14:50:09</div>
<div class="t" style="left:544.5px;top:1015.03px;font-size:12.6px;color:#e4e5e9;transform:scaleX(0.935);transform-origin:0 0;-webkit-text-stroke:0.2px #e4e5e9">Task Scheduler-13:50</div>
<div class="t" style="left:872px;top:1017.60px;font-size:13px;color:#b0bdf0;transform:scaleX(0.932);transform-origin:0 0;-webkit-text-stroke:0.2px #b0bdf0">1b324711071c41288c1cda585d9659d9</div>
<div class="t" style="left:1199.5px;top:1015.03px;font-size:12.6px;color:#e4e5e9;transform:scaleX(0.94);transform-origin:0 0;-webkit-text-stroke:0.2px #e4e5e9">2024-09-18 13:50:00</div>
<div class="t" style="left:1526.5px;top:1015.03px;font-size:12.6px;color:#e4e5e9;transform:scaleX(0.94);transform-origin:0 0;-webkit-text-stroke:0.2px #e4e5e9">2024-09-19 14:50:09</div>
<div class="t" style="left:544.5px;top:1049.03px;font-size:12.6px;color:#e4e5e9;transform:scaleX(0.935);transform-origin:0 0;-webkit-text-stroke:0.2px #e4e5e9">Task Scheduler-14:20</div>
<div class="t" style="left:872px;top:1051.60px;font-size:13px;color:#b0bdf0;transform:scaleX(0.932);transform-origin:0 0;-webkit-text-stroke:0.2px #b0bdf0">2e39b8a161144de59765d63802c3a0ad</div>
<div class="t" style="left:1199.5px;top:1049.03px;font-size:12.6px;color:#e4e5e9;transform:scaleX(0.94);transform-origin:0 0;-webkit-text-stroke:0.2px #e4e5e9">2024-09-17 14:20:01</div>
<div class="t" style="left:1526.5px;top:1049.03px;font-size:12.6px;color:#e4e5e9;transform:scaleX(0.94);transform-origin:0 0;-webkit-text-stroke:0.2px #e4e5e9">2024-09-19 14:50:09</div>
<div class="vl" style="left:1665px;top:685px;height:22px;background:#474b53"></div>
<div class="vl" style="left:1706px;top:685px;height:22px;background:#474b53"></div>
<div class="vl" style="left:1823px;top:685px;height:22px;background:#474b53"></div>
<svg class="abs" style="left:1676px;top:689px" width="20" height="18" viewBox="0 0 20 18">
<path d="M6 4 L7.3 2 H12.7 L14 4 H17.5 C18 4 18.3 4.3 18.3 4.8 V15.2 C18.3 15.7 18 16 17.5 16 H2.5 C2 16 1.7 15.7 1.7 15.2 V4.8 C1.7 4.3 2 4 2.5 4 Z" fill="#5e7499"/>
<circle cx="10" cy="10" r="3.4" fill="none" stroke="#0a0d13" stroke-width="1.5"/>
<circle cx="15.8" cy="6.3" r="0.7" fill="#0a0d13"/>
</svg>
<svg class="abs" style="left:1719px;top:692px" width="18" height="12" viewBox="0 0 18 12">
<path d="M2 6 L4.5 3.5 H15 V8.5 H4.5 Z" fill="#5e7499"/></svg>
<svg class="abs" style="left:1744px;top:689px" width="14" height="18" viewBox="0 0 14 18">
<path d="M1 1 H8.6 L13 5.4 V17 H1 Z" fill="#5e7499"/><path d="M8.6 1 V5.4 H13" fill="#0a0d13" fill-opacity="0.35" stroke="#0a0d13" stroke-width="0.7"/>
<text x="7" y="15.3" font-size="6" font-weight="bold" text-anchor="middle" fill="#0a0d13" font-family="Liberation Sans">(j)</text></svg>
<svg class="abs" style="left:1768px;top:689px" width="14" height="18" viewBox="0 0 14 18">
<path d="M1 1 H8.6 L13 5.4 V17 H1 Z" fill="#5e7499"/><path d="M8.6 1 V5.4 H13" fill="#0a0d13" fill-opacity="0.35" stroke="#0a0d13" stroke-width="0.7"/>
<text x="7" y="15.3" font-size="5.2" font-weight="bold" text-anchor="middle" fill="#0a0d13" font-family="Liberation Sans">csv</text></svg>
<svg class="abs" style="left:1790px;top:689px" width="18" height="18" viewBox="0 0 18 18">
<rect x="0.7" y="1" width="16.3" height="16" rx="1" fill="#5e7499"/>
<path d="M5.8 6 L3 9 L5.8 12 M12 6 L14.8 9 L12 12 M10.2 4.5 L7.6 13.5" fill="none" stroke="#0a0d13" stroke-width="1.4"/></svg>
<svg class="abs" style="left:1835px;top:688px" width="18" height="18" viewBox="0 0 18 18">
<path d="M3.5 14.5 L14.5 3.5" stroke="#5e7499" stroke-width="1.4"/>
<path d="M10.5 1.8 H16.3 V7.6 Z M1.8 10.5 V16.3 H7.6 Z" fill="#5e7499"/></svg>
</body></html>
